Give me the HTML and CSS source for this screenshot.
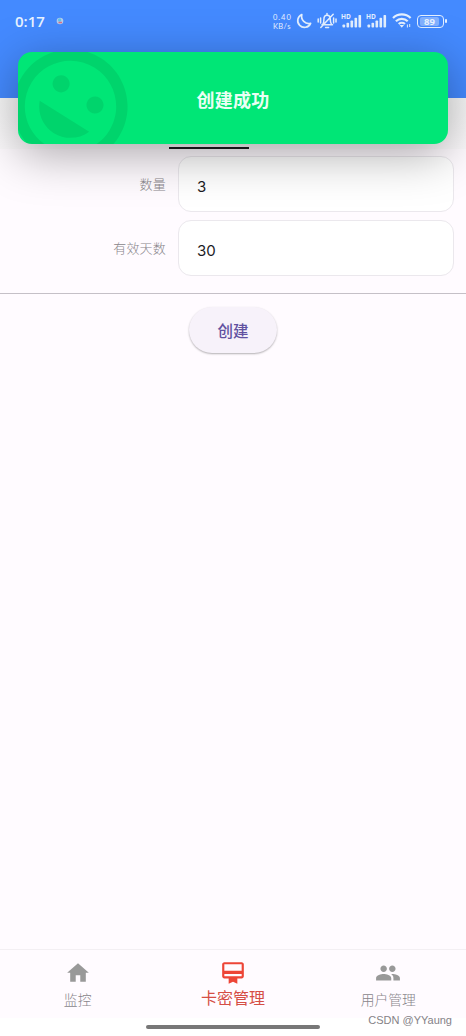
FILE: index.html
```html
<!DOCTYPE html>
<html lang="zh-CN">
<head>
<meta charset="utf-8">
<title>卡密管理</title>
<link rel="stylesheet" href="styles.css">
</head>
<body>
<div class="screen">
  <header class="appbar">
    <div class="status">
      <span class="clock">0:17</span>
      <svg class="app-dot" viewBox="0 0 8 8"><circle cx="4" cy="4" r="3.300" fill="#b6cdee"/><circle cx="3.600" cy="3" r="1.700" fill="#63c4e8"/><path d="M2.500 5.500h3.500" stroke="#d5708c" stroke-width="1.500"/></svg>
      <span class="rate"><span>0.40</span><span>KB/s</span></span>
      <svg class="moon" viewBox="0 0 16 16"><path d="M5.800 1.500A6.700 6.700 0 1 0 14.600 10.300A7.300 7.300 0 0 1 5.800 1.500Z" fill="none" stroke="#e4f0ff" stroke-width="1.700" stroke-linejoin="round"/></svg>
      <svg class="bell" viewBox="0 0 20 18" fill="none" stroke="#e4f0ff" stroke-width="1.500" stroke-linecap="round"><path d="M5 12.800h10.500M6 12c.9-1.400.9-2.500.9-4.600C6.900 4.700 8 3.200 10 3.200s3.300 1.500 3.300 4.200c0 2.100 0 3.200 1.100 4.600M8.600 15.600h3M10 1.600v1M3.800 15.400 16.200 2.300M3.600 6v5M1.200 7v3M16.600 6v5M19 7v3"/></svg>
      <svg class="signal" viewBox="0 0 21 16" fill="#e4f0ff"><text x="0" y="5.500" class="hd">HD</text><rect x="1.500" y="11.500" width="2.600" height="3" rx=".8"/><rect x="5.500" y="9.800" width="2.600" height="4.700" rx=".8"/><rect x="9.500" y="7.500" width="2.600" height="7" rx=".8"/><rect x="13.500" y="4.800" width="2.600" height="9.700" rx=".8"/><rect x="17.500" y="2" width="2.600" height="12.500" rx=".8"/></svg>
      <svg class="signal" viewBox="0 0 21 16" fill="#e4f0ff"><text x="0" y="5.500" class="hd">HD</text><rect x="1.500" y="11.500" width="2.600" height="3" rx=".8"/><rect x="5.500" y="9.800" width="2.600" height="4.700" rx=".8"/><rect x="9.500" y="7.500" width="2.600" height="7" rx=".8"/><rect x="13.500" y="4.800" width="2.600" height="9.700" rx=".8"/><rect x="17.500" y="2" width="2.600" height="12.500" rx=".8"/></svg>
      <svg class="wifi" viewBox="0 0 20 16" fill="none" stroke="#e4f0ff" stroke-width="2.200"><path d="M1 5a12.500 12.500 0 0 1 17.600 0M3.900 8.200a8.400 8.400 0 0 1 11.800 0M6.700 11a4.600 4.600 0 0 1 6.200 0"/><path d="M7.600 12h4.400L9.800 14.800Z" fill="#e4f0ff" stroke="none"/><path d="M15.400 11.500v3M17.700 11v3" stroke-width="1"/></svg>
      <span class="battery"><span class="charge">89</span></span>
    </div>
  </header>

  <main class="content">
    <div class="tabs"><span class="indicator"></span></div>
    <form class="form">
      <label class="row"><span class="label">数量</span><span class="field">3</span></label>
      <label class="row"><span class="label">有效天数</span><span class="field">30</span></label>
    </form>
    <div class="actions"><button class="create" type="button">创建</button></div>
  </main>

  <nav class="nav">
    <a class="item"><svg viewBox="0 0 24 24"><path d="M9.900 20v-6h4.200v6h5.100v-8.200h2.800L12 3 2 11.800h2.800V20z"/></svg><span>监控</span></a>
    <a class="item active"><svg viewBox="0 0 24 24"><path d="M20 2H4c-1.110 0-2 .89-2 2v11c0 1.110.89 2 2 2h4v5l4-2 4 2v-5h4c1.110 0 2-.89 2-2V4c0-1.110-.89-2-2-2zm0 13H4v-2h16v2zm0-5H4V4h16v6z"/></svg><span>卡密管理</span></a>
    <a class="item"><svg viewBox="0 0 24 24"><path d="M16 11c1.660 0 2.990-1.340 2.990-3S17.660 5 16 5s-3 1.340-3 3 1.340 3 3 3zm-8 0c1.660 0 2.990-1.340 2.990-3S9.660 5 8 5 5 6.340 5 8s1.340 3 3 3zm0 2c-2.330 0-7 1.170-7 3.500V19h14v-2.500c0-2.330-4.670-3.500-7-3.500zm8 0c-.29 0-.62.02-.97.05 1.160.84 1.970 1.970 1.970 3.450V19h6v-2.500c0-2.330-4.670-3.500-7-3.500z"/></svg><span>用户管理</span></a>
  </nav>
  <div class="gesture"><span class="pill"></span></div>

  <div class="toast">
    <svg class="smile" viewBox="0 0 24 24"><path transform="rotate(32 12 12)" d="M11.990 2C6.470 2 2 6.480 2 12s4.470 10 9.990 10C17.520 22 22 17.520 22 12S17.520 2 11.990 2zM12 20c-4.420 0-8-3.580-8-8s3.580-8 8-8 8 3.580 8 8-3.580 8-8 8zm3.500-9c.83 0 1.500-.67 1.500-1.500S16.330 8 15.500 8 14 8.670 14 9.500s.67 1.500 1.500 1.500zm-7 0c.83 0 1.500-.67 1.500-1.500S9.330 8 8.500 8 7 8.670 7 9.500 7.670 11 8.500 11zm3.500 6.500c2.330 0 4.310-1.460 5.110-3.500H6.890c.8 2.040 2.780 3.500 5.110 3.500z"/></svg>
    <span class="message">创建成功</span>
  </div>
  <span class="watermark">CSDN @YYaung</span>
</div>
</body>
</html>
```

FILE: styles.css
```css
* { box-sizing: border-box; }
body { margin: 0; font-family: Roboto, "Noto Sans CJK SC", sans-serif; }
.screen {
  position: relative;
  display: flex;
  flex-direction: column;
  width: 466px;
  height: 1036px;
  overflow: hidden;
  background: #fffbff;
}

.appbar { height: 98px; background: #448aff; }
.status { display: flex; align-items: center; height: 42px; padding-left: 15px; color: #e9f3ff; }
.clock { width: 41px; font: 600 15px/20px "Open Sans", sans-serif; }
.app-dot { width: 8px; height: 8px; margin-right: 209px; }
.rate { display: flex; flex-direction: column; width: 23px; padding-top: 1px; font: 400 7.5px/9px Lato, sans-serif; letter-spacing: 1px; white-space: nowrap; }
.rate span + span { letter-spacing: .4px; }
.moon { width: 16px; height: 16px; }
.bell { width: 20px; height: 18px; margin-left: 5px; }
.signal { width: 21px; height: 16px; margin-left: 4px; overflow: visible; }
.hd { font: 700 6.5px "Open Sans", sans-serif; }
.wifi { width: 20px; height: 16px; margin-left: 5px; }
.battery {
  position: relative;
  width: 27px;
  height: 13px;
  margin-left: 5px;
  padding: 1px;
  border: 1.5px solid #e4f0ff;
  border-radius: 4px;
}
.battery::after {
  content: "";
  position: absolute;
  right: -4px;
  top: 3px;
  width: 2px;
  height: 4px;
  border-radius: 1px;
  background: #e4f0ff;
}
.charge {
  display: block;
  width: 19px;
  height: 9px;
  margin-left: 1px;
  border-radius: 2px;
  background: #82b1ff;
  font: 700 9.5px/9px "Open Sans", sans-serif;
  text-align: center;
}

.content { flex: 1; }
.tabs {
  display: flex;
  align-items: flex-end;
  height: 51px;
  padding-left: 169px;
  background: linear-gradient(#f8f8f8, #fbf9fb);
}
.indicator { width: 80px; height: 2px; background: #1c1b1f; }
.form {
  display: flex;
  flex-direction: column;
  gap: 8px;
  padding: 7px 12px 17px 0;
  border-bottom: 1px solid #c5c0c7;
}
.row { display: flex; align-items: center; }
.label { width: 166px; margin-right: 12px; padding-top: 1px; color: #88858a; font-size: 13px; font-weight: 300; line-height: 20px; text-align: right; letter-spacing: .2px; }
.field {
  flex: 1;
  height: 56px;
  padding: 2px 0 0 18px;
  border: 1px solid #ebe8ed;
  border-radius: 13px;
  background: #fff;
  color: #1c1b1f;
  font: 400 15px/56px Inter, sans-serif;
}
.actions { display: flex; justify-content: center; padding-top: 13px; }
.create {
  width: 88px;
  height: 46px;
  padding: 0;
  border: 0;
  border-radius: 23px;
  background: #f7f2fa;
  box-shadow: 0 1px 2px rgba(0, 0, 0, .3);
  color: #6151a0;
  font: 500 15.5px "Noto Sans CJK SC", sans-serif;
}

.nav { display: flex; height: 69px; border-top: 1px solid #f3eff3; }
.item { display: flex; flex: 1; flex-direction: column; align-items: center; padding-top: 10px; color: #88858a; font-size: 13.8px; font-weight: 300; line-height: 20px; }
.item svg { width: 26px; height: 26px; margin-bottom: 4px; fill: #999; }
.active { color: #d54e45; font-size: 16px; font-weight: 400; }
.active svg { margin-bottom: 3px; fill: #ed4537; }
.gesture { display: flex; justify-content: center; height: 18px; padding-top: 7px; background: #fff; }
.pill { width: 174px; height: 4px; border-radius: 2px; background: #777; }

.toast {
  position: absolute;
  left: 18px;
  top: 52px;
  display: flex;
  align-items: center;
  justify-content: center;
  width: 430px;
  height: 92px;
  overflow: hidden;
  border-radius: 14px;
  background: #00e676;
  box-shadow: 0 10px 48px rgba(0, 0, 0, .34);
}
.smile { position: absolute; left: -16px; top: -14px; width: 137px; height: 137px; fill: rgba(0, 0, 0, .08); }
.message { padding-top: 1px; color: #eafff4; font-size: 18px; font-weight: 700; letter-spacing: .3px; }
.watermark { position: absolute; right: 14px; bottom: 8px; color: #858287; font: 400 11px/15px "Liberation Sans", sans-serif; }
```
